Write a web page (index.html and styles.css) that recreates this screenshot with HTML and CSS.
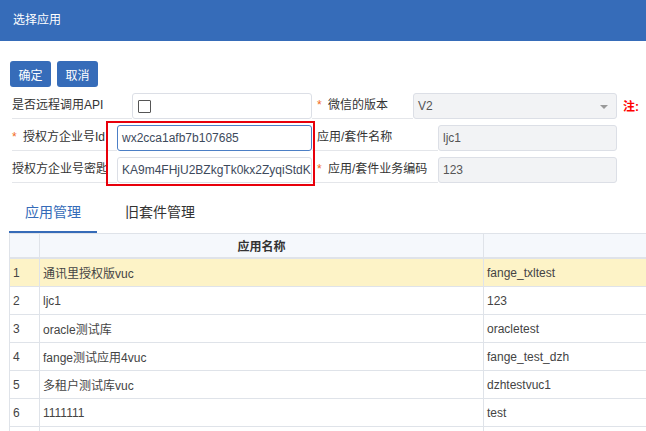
FILE: index.html
```html
<!DOCTYPE html>
<html lang="zh">
<head>
<meta charset="utf-8">
<title>选择应用</title>
<link rel="stylesheet" href="styles.css">
</head>
<body>
<div class="header">选择应用</div>
<div class="toolbar">
  <button class="btn">确定</button>
  <button class="btn">取消</button>
</div>
<div class="form">
  <div class="row">
    <div class="label l1-r1">是否远程调用API</div>
    <div class="field f1-r1"><span class="checkbox"></span></div>
    <div class="label l2-r1"><span class="star">*</span>微信的版本</div>
    <div class="field f2-r1 disabled select"><span class="val">V2</span><span class="arrow"></span></div>
    <div class="note">注:</div>
  </div>
  <div class="row">
    <div class="label l1-r2"><span class="star">*</span>授权方企业号Id</div>
    <div class="field f1-r2 focused"><span class="val dark">wx2cca1afb7b107685</span></div>
    <div class="label l2-r2 plain">应用/套件名称</div>
    <div class="field f2-r2 disabled"><span class="val">ljc1</span></div>
  </div>
  <div class="row">
    <div class="label l1-r2 nostar">授权方企业号密匙</div>
    <div class="field f1-r2"><span class="val dark">KA9m4FHjU2BZkgTk0kx2ZyqiStdK</span></div>
    <div class="label l2-r2"><span class="star">*</span>应用/套件业务编码</div>
    <div class="field f2-r2 disabled"><span class="val">123</span></div>
  </div>
  <div class="redbox"></div>
</div>
<div class="tabs">
  <div class="tab active">应用管理</div>
  <div class="tab">旧套件管理</div>
</div>
<div class="grid-wrap">
  <table class="grid">
    <colgroup><col class="c-idx"><col class="c-name"><col class="c-code"></colgroup>
    <thead>
      <tr><th></th><th>应用名称</th><th></th></tr>
    </thead>
    <tbody>
      <tr class="sel"><td>1</td><td>通讯里授权版vuc</td><td>fange_txltest</td></tr>
      <tr><td>2</td><td>ljc1</td><td>123</td></tr>
      <tr><td>3</td><td>oracle测试库</td><td>oracletest</td></tr>
      <tr><td>4</td><td>fange测试应用4vuc</td><td>fange_test_dzh</td></tr>
      <tr><td>5</td><td>多租户测试库vuc</td><td>dzhtestvuc1</td></tr>
      <tr><td>6</td><td>1111111</td><td>test</td></tr>
      <tr><td></td><td></td><td></td></tr>
    </tbody>
  </table>
</div>
</body>
</html>
```
FILE: styles.css
```css
html, body {
  margin: 0;
  padding: 0;
  overflow: hidden;
  background: #fff;
}
body {
  width: 646px;
  height: 431px;
  font-family: "Liberation Sans", "Noto Sans CJK SC", sans-serif;
  font-size: 12px;
  color: #333;
}
.header {
  height: 41px;
  line-height: 41px;
  background: #366cb9;
  color: #fff;
  padding-left: 13px;
  font-size: 12px;
}
.toolbar {
  display: flex;
  gap: 6px;
  padding: 20px 0 0 10px;
  height: 26px;
}
.btn {
  width: 41px;
  height: 26px;
  border: none;
  border-radius: 3px;
  background: #366cb9;
  color: #fff;
  font-family: inherit;
  font-size: 12px;
  padding: 0;
}
.form {
  position: relative;
  padding-left: 12px;
}
.row {
  display: flex;
  align-items: flex-end;
  height: 32px;
}
.label {
  box-sizing: border-box;
  height: 26px;
  line-height: 24px;
  border-bottom: 1px solid #e4e6ea;
  white-space: nowrap;
  overflow: visible;
}
.star {
  color: #f26a21;
  display: inline-block;
  width: 11px;
}
.l1-r1 { width: 120px; }
.l1-r2 { width: 105px; }
.l2-r1 { width: 101px; padding-left: 5px; }
.l2-r2 { width: 126px; padding-left: 5px; }
.field {
  box-sizing: border-box;
  height: 26px;
  border: 1px solid #dcdfe6;
  border-radius: 3px;
  background: #fff;
  display: flex;
  align-items: center;
  padding-left: 4px;
  position: relative;
  overflow: hidden;
  white-space: nowrap;
}
.f1-r1 { width: 180px; padding-left: 5px; }
.f1-r2 { width: 195px; }
.f2-r1 { width: 204px; }
.f2-r2 { width: 179px; }
.field.disabled { background: #f2f3f5; }
.field.focused { border-color: #4c7fc6; }
.val { color: #555; }
.val.dark { color: #3d4a5c; }
.checkbox {
  display: inline-block;
  box-sizing: border-box;
  width: 13px;
  height: 13px;
  border: 1px solid #555;
  border-radius: 1px;
  background: #fff;
}
.arrow {
  position: absolute;
  right: 8px;
  top: 11px;
  width: 0;
  height: 0;
  border-left: 4px solid transparent;
  border-right: 4px solid transparent;
  border-top: 4px solid #999;
}
.note {
  color: #f00;
  font-weight: bold;
  font-size: 12px;
  margin-left: 6px;
  align-self: center;
  margin-top: 4px;
}
.redbox {
  position: absolute;
  left: 106px;
  top: 34px;
  width: 205px;
  height: 61px;
  border: 2px solid #e8000b;
}
.tabs {
  display: flex;
  gap: 12px;
  margin: 10px 0 0 9px;
}
.tab {
  box-sizing: border-box;
  height: 40px;
  line-height: 38px;
  padding: 0 16px;
  font-size: 14px;
  color: #333;
  border-bottom: 2px solid transparent;
}
.tab.active {
  color: #356bb8;
  border-bottom-color: #356bb8;
}
.grid-wrap {
  margin-left: 9px;
  width: 637px;
  height: 198px;
  overflow: hidden;
}
.grid {
  border-collapse: collapse;
  width: 800px;
  table-layout: fixed;
}
.c-idx { width: 30px; }
.c-name { width: 444px; }
.c-code { width: 326px; }
.grid th, .grid td {
  border: 1px solid #dfe3e9;
  padding: 0 3px;
  text-align: left;
  white-space: nowrap;
}
.grid th {
  height: 23px;
  background: #f5f8fc;
  font-weight: bold;
  text-align: center;
  border-bottom: 2px solid #dfe3e9;
  color: #333;
}
.grid td {
  height: 27px;
  color: #444;
}
.grid tr.sel td { background: #fdf3c7; }
```
